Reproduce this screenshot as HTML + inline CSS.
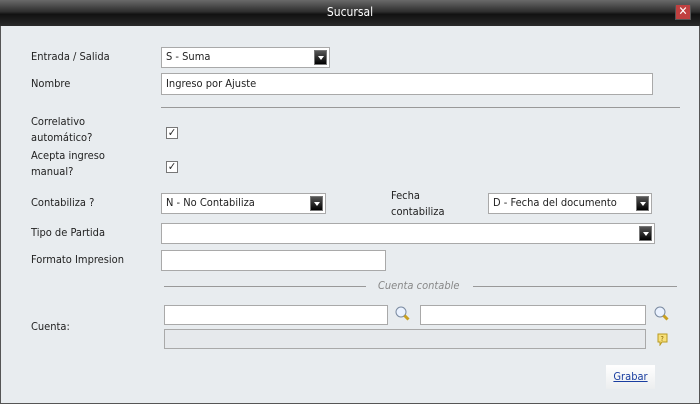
<!DOCTYPE html><html><head><style>
*{margin:0;padding:0;box-sizing:border-box}
body{width:700px;height:404px;background:#e8ecef;font-family:"DejaVu Sans Condensed","Liberation Sans Narrow","Liberation Sans",sans-serif;font-size:11px;color:#222;position:relative;overflow:hidden}
.a{position:absolute}
.frame{left:0;top:0;width:700px;height:404px;border:1px solid #555;border-top:none}
.tb{left:0;top:0;width:700px;height:26px;background:linear-gradient(#6a6a6a,#2e2e2e 45%,#111 55%,#2a2a2a);color:#fff;text-align:center;line-height:25px;font-size:12px}
.x{left:675px;top:4px;width:16px;height:16px;background:#c04040;border:1px solid #555;color:#fff;font-size:12px;line-height:13px;text-align:center}
.in{background:#fff;border:1px solid #a9a9a9;padding-left:4px;line-height:18px;font-size:11px}
.dd{position:absolute;right:2px;top:2px;width:13px;height:15px;background:linear-gradient(#555,#000);border:1px solid #777}
.dd:after{content:"";position:absolute;left:3px;top:5px;border:3px solid transparent;border-top:4px solid #fff}
.cb{width:12px;height:12px;border:1px solid #777;background:#fff;font-size:11px;line-height:10px;text-align:center;font-weight:bold}
.ln{height:1px;background:#999}
</style></head><body>
<div class="a frame"></div>
<div class="a tb">Sucursal</div>
<div class="a x">✕</div>
<div class="a" style="left:31px;top:50px">Entrada / Salida</div>
<div class="a in" style="left:161px;top:47px;width:169px;height:21px">S - Suma<div class="dd"></div></div>
<div class="a" style="left:31px;top:77px">Nombre</div>
<div class="a in" style="left:161px;top:73px;width:492px;height:22px;line-height:20px">Ingreso por Ajuste</div>
<div class="a ln" style="left:161px;top:107px;width:519px"></div>
<div class="a" style="left:31px;top:114px;line-height:16px">Correlativo<br>automático?</div>
<div class="a cb" style="left:166px;top:127px">✓</div>
<div class="a" style="left:31px;top:148px;line-height:16px">Acepta ingreso<br>manual?</div>
<div class="a cb" style="left:166px;top:161px">✓</div>
<div class="a" style="left:31px;top:196px">Contabiliza ?</div>
<div class="a in" style="left:161px;top:193px;width:165px;height:21px">N - No Contabiliza<div class="dd"></div></div>
<div class="a" style="left:391px;top:188px;line-height:16px">Fecha<br>contabiliza</div>
<div class="a in" style="left:488px;top:193px;width:164px;height:21px">D - Fecha del documento<div class="dd"></div></div>
<div class="a" style="left:31px;top:226px">Tipo de Partida</div>
<div class="a in" style="left:161px;top:223px;width:494px;height:21px"><div class="dd"></div></div>
<div class="a" style="left:31px;top:253px">Formato Impresion</div>
<div class="a in" style="left:161px;top:250px;width:225px;height:21px"></div>
<div class="a ln" style="left:164px;top:286px;width:202px"></div>
<div class="a" style="left:378px;top:279px;color:#888;font-style:italic">Cuenta contable</div>
<div class="a ln" style="left:473px;top:286px;width:204px"></div>
<div class="a" style="left:31px;top:320px">Cuenta:</div>
<div class="a in" style="left:164px;top:305px;width:224px;height:20px"></div>
<svg class="a" style="left:395px;top:306px" width="16" height="16"><circle cx="6" cy="6" r="5" fill="#eaf2ff" stroke="#7a8aa0"/><path d="M9.5 9.5l4 4" stroke="#c9a020" stroke-width="3"/></svg>
<div class="a in" style="left:420px;top:305px;width:226px;height:20px"></div>
<svg class="a" style="left:654px;top:306px" width="16" height="16"><circle cx="6" cy="6" r="5" fill="#eaf2ff" stroke="#7a8aa0"/><path d="M9.5 9.5l4 4" stroke="#c9a020" stroke-width="3"/></svg>
<div class="a in" style="left:164px;top:329px;width:482px;height:20px;background:#e6e9ec"></div>
<svg class="a" style="left:657px;top:333px" width="11" height="13"><path d="M1 1h9v8H5l-2 3V9H1z" fill="#f7e07a" stroke="#b99a20"/><text x="3.5" y="8" font-size="7" fill="#806000">?</text></svg>
<div class="a" style="left:606px;top:365px;width:49px;height:24px;background:linear-gradient(#fff,#eceeef);text-align:center;line-height:23px;color:#1a3ea0;text-decoration:underline">Grabar</div>
</body></html>
